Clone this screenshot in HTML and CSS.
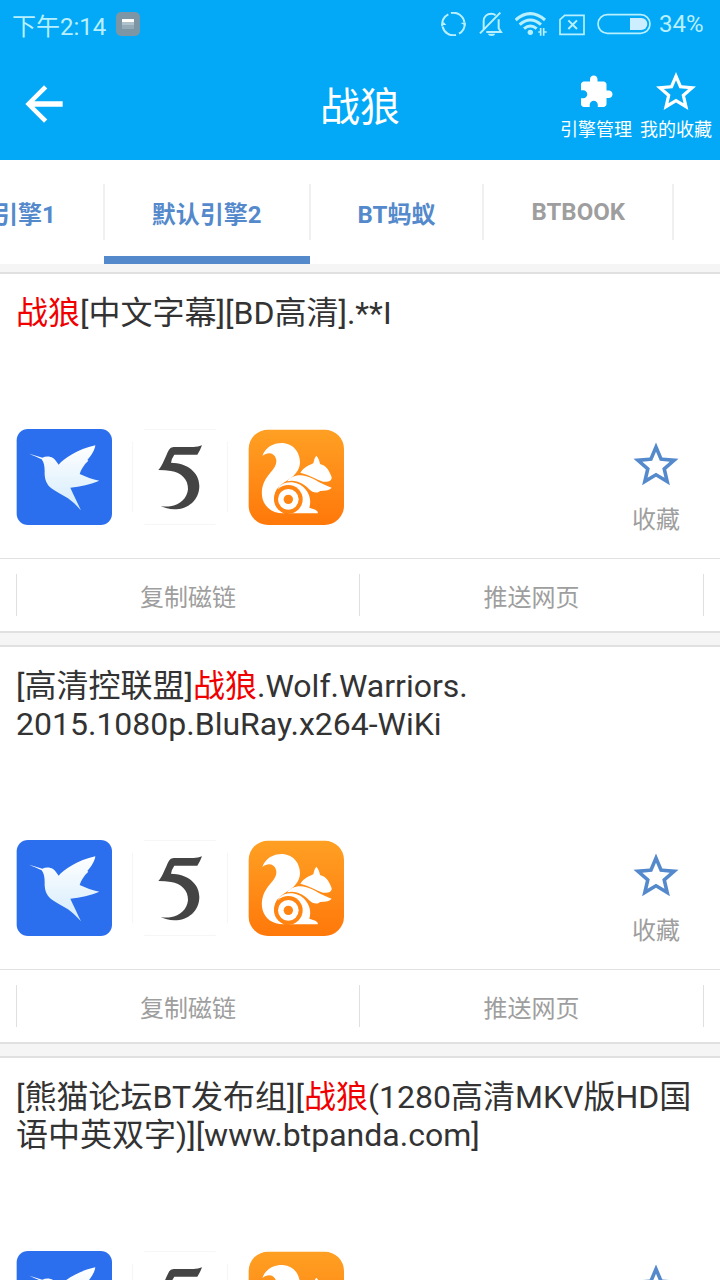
FILE: index.html
```html
<!DOCTYPE html>
<html lang="zh-CN">
<head>
    <meta charset="UTF-8">
    <meta name="viewport" content="width=device-width, initial-scale=1.0">
    <title>战狼</title>
    <link rel="stylesheet" href="styles.css">
</head>
<body>
    <!-- shared icons -->
    <svg class="sprite" aria-hidden="true">
        <defs>
            <linearGradient id="birdFill" x1="0" y1="0" x2="0" y2="1">
                <stop offset="0" stop-color="#ffffff"/>
                <stop offset="1" stop-color="#d3ebfb"/>
            </linearGradient>
            <linearGradient id="ucFill" x1="0" y1="0" x2="0" y2="1">
                <stop offset="0" stop-color="#ffa023"/>
                <stop offset="1" stop-color="#ff780a"/>
            </linearGradient>
        </defs>
        <symbol id="star" viewBox="0 0 24 24">
            <path fill="currentColor" d="M22 9.24l-7.19-.62L12 2 9.19 8.63 2 9.24l5.46 4.73L5.82 21 12 17.27 18.18 21l-1.63-7.03L22 9.24zM12 15.4l-3.76 2.27 1-4.28-3.32-2.88 4.38-.38L12 6.1l1.71 4.04 4.38.38-3.32 2.88 1 4.28L12 15.4z"/>
        </symbol>
        <symbol id="bird" viewBox="18 27 288 288">
            <rect x="20" y="27" width="286" height="288" rx="34" fill="#2b6fee"/>
            <path fill="url(#birdFill)" d="M58 101L97 113C107 108 120 108 129 114C136 119 140 126 146 134C160 117 203 87 256 76C254 91 244 107 232 120L235 122C222 134 213 148 209 162C228 171 247 178 268 182C243 193 210 200 181 203C190 223 202 247 213 271C199 256 187 244 174 235C157 224 138 216 124 205C108 192 103 174 104 154C104 139 102 128 95 118C84 112 70 107 58 101Z"/>
        </symbol>
        <symbol id="five" viewBox="21 27 288 288">
            <path fill="none" stroke="#f5f5f5" stroke-width="3" d="M58 28H272M58 313H272M23 65V276M307 65V276"/>
            <path fill="#444" d="M132 89Q136 81 146 81H205Q220 81 231 76Q227 88 217 104H148Q140 115 138 128C186 129 223 156 223 198C223 240 190 268 148 268Q124 267 107 258Q122 261 136 259C166 254 186 236 189 208C190 177 168 158 138 153Q121 150 100 150C113 137 121 109 132 89Z"/>
        </symbol>
        <symbol id="squirrel" viewBox="24 27 288 288">
            <rect x="26" y="29" width="286" height="286" rx="58" fill="url(#ucFill)"/>
            <path fill="#fff" d="M67 108C76 82 100 68 129 69C161 72 179 96 180 126C180 151 163 169 139 183C117 197 103 209 103 235C104 255 116 270 133 280C99 281 76 264 68 238C60 206 72 180 91 158C104 143 112 131 108 116C103 99 84 94 67 108Z"/>
            <path fill="#fff" d="M181 158C192 142 208 135 220 130C222 121 224 112 229 107C235 113 239 122 240 132C257 136 267 149 275 172C276 183 264 187 249 185C229 179 208 164 181 158Z"/>
            <path fill="#fff" d="M141 184C154 168 176 161 199 169C225 176 244 194 275 203C265 214 250 211 240 213C232 221 220 218 211 211C193 192 169 177 141 184Z"/>
            <path fill="#fff" d="M116 200C140 179 176 185 195 206C210 223 214 243 208 263L226 269Q234 273 234 280H147L110 240Z"/>
            <circle cx="145" cy="238" r="43" fill="#ff8412"/>
            <circle cx="145" cy="238" r="31" fill="#fff"/>
            <circle cx="145" cy="238" r="14" fill="#ff8412"/>
        </symbol>
    </svg>

    <header class="header">
        <div class="statusbar">
            <span>下午2:14</span>
            <svg width="24" height="24" viewBox="0 0 24 24">
                <rect width="24" height="24" rx="5" fill="#7c96a6"/>
                <path fill="#b1c1cc" d="M6 10h12v3H6z"/>
                <path fill="#96abb8" d="M6 13h12v4H6z"/>
                <path fill="#fff" d="M6 7h12v3H6z"/>
            </svg>
            <div class="status-icons">
                <svg width="26" height="24" viewBox="36 36 78 72" fill="none" stroke="currentColor" stroke-width="6">
                    <path d="M40 79A33 33 0 0 1 58 43M66 39A33 33 0 0 1 106 67M107 70A33 33 0 0 1 90 101M81 105A33 33 0 0 1 41 80"/>
                    <path fill="currentColor" stroke="none" d="M36 75l8-9 8 9zM95 69l15-2v10z"/>
                </svg>
                <svg width="24" height="24" viewBox="147 36 72 72" fill="none" stroke="currentColor" stroke-width="6">
                    <path d="M161 88V64C161 49 171 41 184 41Q192 41 197 46M206 58V85L213 96H169M150 100L211 38"/>
                    <path fill="currentColor" stroke="none" d="M173 101h23q-2 7-11 7t-12-7z"/>
                </svg>
                <svg width="32" height="24" viewBox="255 36 96 72" fill="none" stroke="currentColor" stroke-width="9">
                    <path d="M257 60Q301 22 345 60M269 74Q301 46 333 74M282 86Q301 70 320 86"/>
                    <circle cx="301" cy="97" r="8" fill="currentColor" stroke="none"/>
                    <path stroke-width="5" d="M332 84V107M341 84V107M332 96H325M341 96H350"/>
                </svg>
                <svg width="26" height="24" viewBox="387 36 78 72" fill="none" stroke="currentColor" stroke-width="5">
                    <path d="M404 46H462V103H390V59Z"/>
                    <path stroke-width="6" d="M415 61L441 87M441 61L415 87"/>
                </svg>
                <div class="battery">
                    <svg width="54" height="24" viewBox="501 36 162 72">
                        <rect x="504" y="44" width="156" height="56" rx="28" fill="none" stroke="currentColor" stroke-width="5"/>
                        <path fill="#cceeff" d="M600 54H634A18 18 0 0 1 634 90H600Z"/>
                    </svg>
                    <span>34%</span>
                </div>
            </div>
        </div>
        <div class="toolbar">
            <button class="back" aria-label="返回">
                <svg width="56" height="56" viewBox="0 0 24 24"><path fill="currentColor" d="M20 10.800H7.830l5.590-5.390L12 4l-8 8 8 8 1.410-1.410L7.830 13.200H20z"/></svg>
            </button>
            <h1>战狼</h1>
            <div class="tools">
                <button class="tool">
                    <span class="tool-icon"><svg width="36" height="36" viewBox="0 0 24 24"><path fill="currentColor" d="M20.500 11H19V7c0-1.100-.9-2-2-2h-4V3.500C13 2.120 11.880 1 10.500 1S8 2.120 8 3.500V5H4c-1.100 0-1.990.9-1.990 2v3.800H3.500c1.490 0 2.700 1.210 2.700 2.700s-1.210 2.700-2.700 2.700H2V20c0 1.100.9 2 2 2h3.800v-1.500c0-1.490 1.210-2.700 2.700-2.700 1.490 0 2.700 1.210 2.700 2.700V22H17c1.100 0 2-.9 2-2v-4h1.500c1.380 0 2.500-1.120 2.500-2.500S21.880 11 20.500 11z"/></svg></span>
                    引擎管理
                </button>
                <button class="tool">
                    <span class="tool-icon"><svg width="48" height="48"><use href="#star"/></svg></span>
                    我的收藏
                </button>
            </div>
        </div>
    </header>

    <nav class="tabs">
        <button class="tab">默认引擎1</button>
        <button class="tab active">默认引擎2</button>
        <button class="tab">BT蚂蚁</button>
        <button class="tab muted">BTBOOK</button>
    </nav>

    <main class="results">
        <article class="card">
            <h2><em>战狼</em>[中文字幕][BD高清].**I</h2>
            <div class="open-row">
                <button class="app" aria-label="迅雷"><svg><use href="#bird"/></svg></button>
                <button class="app" aria-label="5"><svg><use href="#five"/></svg></button>
                <button class="app" aria-label="UC"><svg><use href="#squirrel"/></svg></button>
                <button class="fav"><svg><use href="#star"/></svg><span>收藏</span></button>
            </div>
            <div class="actions">
                <button>复制磁链</button>
                <button>推送网页</button>
            </div>
        </article>

        <article class="card">
            <h2>[高清控联盟]<em>战狼</em>.Wolf.Warriors.<br>2015.1080p.BluRay.x264-WiKi</h2>
            <div class="open-row">
                <button class="app" aria-label="迅雷"><svg><use href="#bird"/></svg></button>
                <button class="app" aria-label="5"><svg><use href="#five"/></svg></button>
                <button class="app" aria-label="UC"><svg><use href="#squirrel"/></svg></button>
                <button class="fav"><svg><use href="#star"/></svg><span>收藏</span></button>
            </div>
            <div class="actions">
                <button>复制磁链</button>
                <button>推送网页</button>
            </div>
        </article>

        <article class="card">
            <h2>[熊猫论坛BT发布组][<em>战狼</em>(1280高清MKV版HD国语中英双字)][www.btpanda.com]</h2>
            <div class="open-row">
                <button class="app" aria-label="迅雷"><svg><use href="#bird"/></svg></button>
                <button class="app" aria-label="5"><svg><use href="#five"/></svg></button>
                <button class="app" aria-label="UC"><svg><use href="#squirrel"/></svg></button>
                <button class="fav"><svg><use href="#star"/></svg><span>收藏</span></button>
            </div>
            <div class="actions">
                <button>复制磁链</button>
                <button>推送网页</button>
            </div>
        </article>
    </main>
</body>
</html>
```
FILE: styles.css
```css
* {
    box-sizing: border-box;
}
body {
    margin: 0;
    height: 100vh;
    display: flex;
    flex-direction: column;
    overflow: hidden;
    font-family: Roboto, "Noto Sans CJK SC", sans-serif;
    background: #f5f5f5;
    color: #333;
}
button {
    margin: 0;
    padding: 0;
    border: none;
    background: none;
    color: inherit;
    font: inherit;
    cursor: pointer;
}
svg {
    display: block;
    flex: none;
}
.sprite {
    position: absolute;
    width: 0;
    height: 0;
}

/* header */
.header {
    flex: none;
    background: #03a9f6;
    color: #fff;
}
.statusbar {
    display: flex;
    align-items: center;
    gap: 10px;
    height: 48px;
    padding: 0 12px;
    font-size: 24px;
    color: #b8f0ff;
}
.status-icons {
    display: flex;
    align-items: center;
    gap: 12px;
    margin-left: auto;
}
.battery {
    display: flex;
    align-items: center;
    gap: 8px;
}
.battery span {
    width: 49px;
}
.toolbar {
    display: grid;
    grid-template-columns: 1fr auto 1fr;
    align-items: center;
    height: 112px;
    padding: 0 8px;
}
.back {
    justify-self: start;
    margin-left: 8px;
}
.toolbar h1 {
    margin: 0;
    font-size: 40px;
    font-weight: 400;
}
.tools {
    display: flex;
    justify-self: end;
    gap: 8px;
}
.tool {
    display: flex;
    flex-direction: column;
    align-items: center;
    gap: 4px;
    font-size: 18px;
    line-height: 20px;
}
.tool-icon {
    display: flex;
    align-items: center;
    height: 48px;
}

/* engine tabs */
.tabs {
    flex: none;
    display: flex;
    height: 104px;
    margin-left: -102px;
    background: #fff;
    overflow: hidden;
}
.tab {
    position: relative;
    flex: none;
    padding: 0 48px;
    font-size: 24px;
    font-weight: 700;
    color: #5489cb;
}
.tab::after {
    content: "";
    position: absolute;
    top: 24px;
    right: -1px;
    width: 2px;
    height: 56px;
    background: #f0f0f0;
}
.tab.active {
    border-top: 8px solid transparent;
    border-bottom: 8px solid #5489cb;
}
.tab.active::after {
    top: 16px;
}
.tab.muted {
    color: #9e9e9e;
}

/* results */
.results {
    flex: 1;
    min-height: 0;
    display: flex;
    flex-direction: column;
    gap: 12px;
    padding-top: 8px;
    overflow: hidden;
}
.card {
    flex: none;
    background: #fff;
    border-top: 2px solid #e0e0e0;
    border-bottom: 2px solid #e0e0e0;
}
.card h2 {
    margin: 0;
    padding: 20px 16px 97px;
    font-size: 32px;
    line-height: 38px;
    font-weight: 400;
}
.card em {
    font-style: normal;
    color: #f00000;
}
.open-row {
    display: flex;
    align-items: flex-start;
    gap: 20px;
    padding: 0 16px 24px;
}
.app svg {
    width: 96px;
    height: 96px;
}
.fav {
    display: flex;
    flex-direction: column;
    align-items: center;
    gap: 14px;
    margin-left: auto;
    padding: 9px 21px 0;
    font-size: 24px;
    line-height: 28px;
    color: #9e9e9e;
}
.fav svg {
    width: 54px;
    height: 54px;
    color: #5489cb;
}
.actions {
    display: grid;
    grid-template-columns: 1fr 1fr;
    padding: 15px 16px;
    border-top: 1px solid #e0e0e0;
}
.actions button {
    height: 42px;
    border-right: 1px solid #e0e0e0;
    font-size: 24px;
    color: #9e9e9e;
}
.actions button:first-child {
    border-left: 1px solid #e0e0e0;
}
```
